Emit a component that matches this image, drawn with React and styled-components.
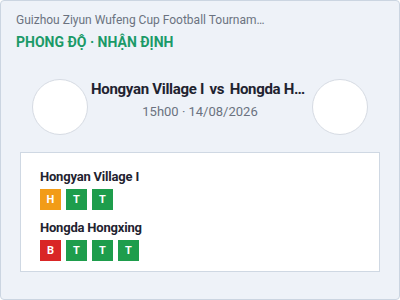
import React from 'react';
import styled, { createGlobalStyle } from 'styled-components';

const GlobalStyle = createGlobalStyle`
  html, body {
    margin: 0;
    padding: 0;
  }
  body {
    font-family: Roboto, "Liberation Sans", Arial, sans-serif;
  }
  * {
    box-sizing: border-box;
  }
`;

const Wrapper = styled.div`
  width: 400px;
  height: 300px;
  border: 1px solid #cbd5e1;
  border-radius: 4px;
  background: #eef2f8;
  padding: 11px 15px 0;
  display: flex;
  flex-direction: column;
`;

const League = styled.div`
  font-size: 12px;
  line-height: 16px;
  color: #6b7280;
  max-width: 251px;
  white-space: nowrap;
  overflow: hidden;
  text-overflow: ellipsis;
`;

const Heading = styled.div`
  margin-top: 5px;
  font-size: 14px;
  line-height: 18px;
  font-weight: 700;
  color: #1b9a68;
`;

const MatchRow = styled.div`
  display: flex;
  align-items: flex-start;
  padding: 0 16px;
  margin-top: 28px;
`;

const Logo = styled.div`
  width: 56px;
  height: 56px;
  flex: none;
  border-radius: 50%;
  background: #fff;
  border: 1px solid #d6dbe3;
`;

const MatchInfo = styled.div`
  flex: 1;
  min-width: 0;
  padding: 1px 3px 0;
  text-align: center;
`;

const Teams = styled.div`
  font-size: 15px;
  line-height: 18px;
  font-weight: 700;
  letter-spacing: -0.3px;
  color: #1f2330;
  white-space: nowrap;
  overflow: hidden;
  text-overflow: ellipsis;
`;

const Vs = styled.span`
  margin: 0 2px;
`;

const Kickoff = styled.div`
  margin-top: 6px;
  font-size: 13px;
  line-height: 16px;
  color: #6b7280;
`;

const FormCard = styled.div`
  margin: 17px 4px 0;
  background: #fff;
  border: 1px solid #cfd8e3;
  padding: 16px 19px 10px;
`;

const TeamName = styled.div`
  font-size: 13px;
  line-height: 16px;
  font-weight: 700;
  letter-spacing: -0.2px;
  color: #1f2330;
  margin-top: ${p => (p.$first ? 0 : 10)}px;
`;

const Badges = styled.div`
  display: flex;
  gap: 5px;
  margin-top: 4px;
`;

const badgeColors = {
  T: '#1e9d4c',
  H: '#f29c17',
  B: '#d92626',
};

const Badge = styled.div`
  width: 21px;
  height: 21px;
  display: flex;
  align-items: center;
  justify-content: center;
  font-size: 11px;
  font-weight: 700;
  color: #fff;
  background: ${p => badgeColors[p.$result]};
`;

const forms = [
  { team: 'Hongyan Village I', results: ['H', 'T', 'T'] },
  { team: 'Hongda Hongxing', results: ['B', 'T', 'T', 'T'] },
];

export default function App() {
  return (
    <>
      <GlobalStyle />
      <Wrapper>
        <League>Guizhou Ziyun Wufeng Cup Football Tournament</League>
        <Heading>PHONG ĐỘ · NHẬN ĐỊNH</Heading>
        <MatchRow>
          <Logo />
          <MatchInfo>
            <Teams>
              Hongyan Village I <Vs>vs</Vs> Hongda Hongxing
            </Teams>
            <Kickoff>15h00 · 14/08/2026</Kickoff>
          </MatchInfo>
          <Logo />
        </MatchRow>
        <FormCard>
          {forms.map((f, i) => (
            <div key={f.team}>
              <TeamName $first={i === 0}>{f.team}</TeamName>
              <Badges>
                {f.results.map((r, j) => (
                  <Badge key={j} $result={r}>{r}</Badge>
                ))}
              </Badges>
            </div>
          ))}
        </FormCard>
      </Wrapper>
    </>
  );
}
